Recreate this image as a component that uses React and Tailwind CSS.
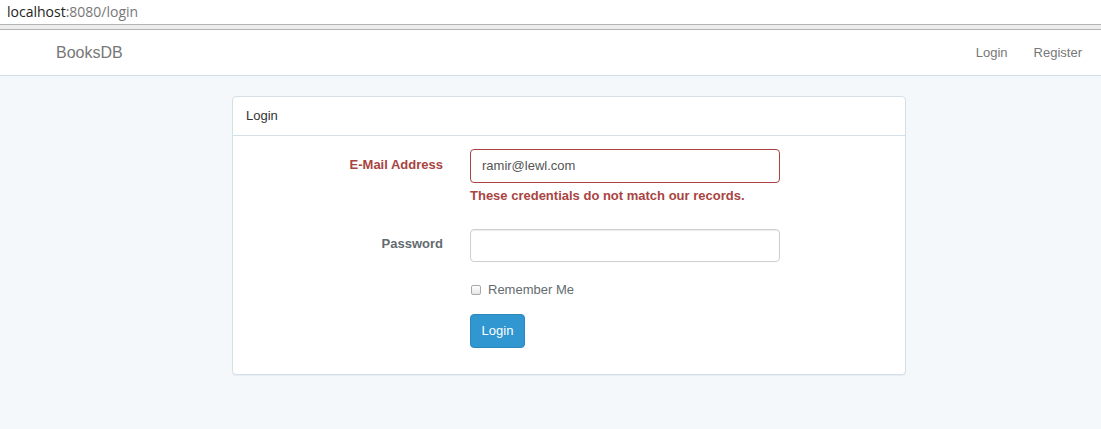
import React from "react";

export default function App() {
  return (
    <div className="min-h-[429px] w-[1101px] bg-[#f5f8fa] text-[13px] text-[#636b6f]" style={{ fontFamily: '"Liberation Sans", Arial, sans-serif' }}>
      {/* address bar */}
      <div className="h-[24px] bg-white flex items-center pl-[7px] text-[14px] leading-none" style={{ fontFamily: '"Segoe UI", "Open Sans", "Noto Sans", sans-serif' }}>
        <span className="text-[#222]">localhost</span>
        <span className="text-[#777]">:8080/login</span>
      </div>
      <div className="h-[6px] border-y border-[#b3b3b3] bg-[#ededed]"></div>
      {/* navbar */}
      <div className="h-[46px] bg-white border-b border-[#d3e0e9] flex items-center justify-between">
        <div className="pl-[56px] text-[16px] text-[#777]">BooksDB</div>
        <div className="flex items-center text-[13px] text-[#777] pr-[19px]">
          <span className="mr-[26px]">Login</span>
          <span>Register</span>
        </div>
      </div>
      {/* panel */}
      <div className="ml-[232px] mt-[20px] w-[674px] bg-white border border-[#d3e0e9] rounded-[4px] shadow-[0_1px_1px_rgba(0,0,0,0.05)]">
        <div className="h-[39px] border-b border-[#d3e0e9] flex items-center pl-[13px] text-[#333]">Login</div>
        <div className="pt-[13px] pb-[26px] leading-[18px]">
          <div className="flex">
            <div className="w-[210px] text-right font-bold text-[#a94442] pt-[7px]">E-Mail Address</div>
            <div className="ml-[27px] w-[310px]">
              <div className="h-[34px] border border-[#a94442] rounded-[4px] flex items-center px-[11px] text-[#555]">ramir@lewl.com</div>
              <div className="mt-[4px] font-bold text-[#a94442]">These credentials do not match our records.</div>
            </div>
          </div>
          <div className="flex mt-[24px]">
            <div className="w-[210px] text-right font-bold pt-[6px]">Password</div>
            <div className="ml-[27px] w-[310px]">
              <div className="h-[33px] border border-[#ccd0d2] rounded-[4px] shadow-[inset_0_1px_1px_rgba(0,0,0,0.075)]"></div>
            </div>
          </div>
          <div className="flex mt-[19px]">
            <div className="ml-[237px] flex items-center">
              <span className="w-[10px] h-[10px] border border-[#a8a8a8] rounded-[2px] bg-gradient-to-b from-white to-[#e6e6e6] ml-[1px]"></span>
              <span className="ml-[7px] text-[#636b6f]">Remember Me</span>
            </div>
          </div>
          <div className="flex mt-[15px]">
            <div className="ml-[237px] w-[55px] h-[34px] rounded-[4px] bg-[#3097d1] border border-[#2a88bd] text-white flex items-center justify-center">Login</div>
          </div>
        </div>
      </div>
    </div>
  );
}
